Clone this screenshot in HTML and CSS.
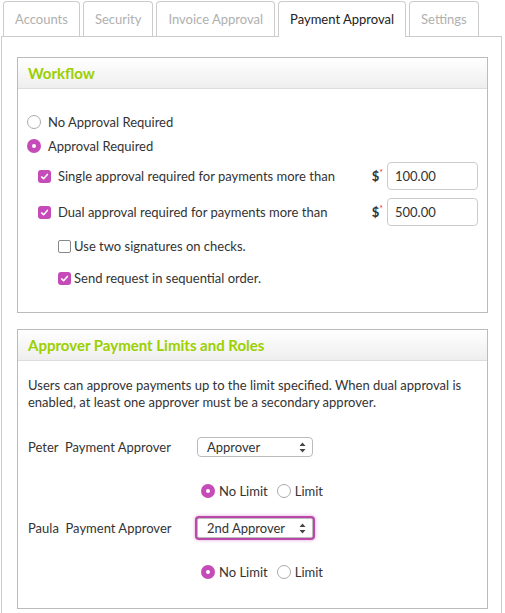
FILE: index.html
```html
<!DOCTYPE html>
<html lang="en">
<head>
    <meta charset="UTF-8">
    <meta name="viewport" content="width=device-width, initial-scale=1.0">
    <title>Payment Approval Settings</title>
    <link rel="stylesheet" href="styles.css">
</head>
<body>
<!-- Tabs -->
<div class="tabs">
    <div class="tab">Accounts</div>
    <div class="tab">Security</div>
    <div class="tab">Invoice Approval</div>
    <div class="tab active">Payment Approval</div>
    <div class="tab">Settings</div>
</div>

<div class="panel">
    <!-- Workflow -->
    <div class="section">
        <div class="section-head">Workflow</div>
        <div class="section-body workflow">
            <label class="radio-row"><span class="radio"></span>No Approval Required</label>
            <label class="radio-row"><span class="radio on"></span>Approval Required</label>

            <div class="amount-row">
                <span class="check on"><svg width="13" height="13" viewBox="0 0 13 13"><path d="M3.6 6.9 L5.6 8.8 L9.4 4.4" fill="none" stroke="#fff" stroke-width="1.5" stroke-linecap="round" stroke-linejoin="round"/></svg></span>
                <span class="amount-label">Single approval required for payments more than</span>
                <span class="currency">$<sup>*</sup></span>
                <input type="text" class="amount" value="100.00">
            </div>
            <div class="amount-row">
                <span class="check on"><svg width="13" height="13" viewBox="0 0 13 13"><path d="M3.6 6.9 L5.6 8.8 L9.4 4.4" fill="none" stroke="#fff" stroke-width="1.5" stroke-linecap="round" stroke-linejoin="round"/></svg></span>
                <span class="amount-label">Dual approval required for payments more than</span>
                <span class="currency">$<sup>*</sup></span>
                <input type="text" class="amount" value="500.00">
            </div>

            <label class="sub-row"><span class="check"></span>Use two signatures on checks.</label>
            <label class="sub-row"><span class="check on"><svg width="13" height="13" viewBox="0 0 13 13"><path d="M3.6 6.9 L5.6 8.8 L9.4 4.4" fill="none" stroke="#fff" stroke-width="1.5" stroke-linecap="round" stroke-linejoin="round"/></svg></span>Send request in sequential order.</label>
        </div>
    </div>

    <!-- Approver limits -->
    <div class="section">
        <div class="section-head">Approver Payment Limits and Roles</div>
        <div class="section-body limits">
            <p class="intro">Users can approve payments up to the limit specified. When dual approval is enabled, at least one approver must be a secondary approver.</p>

            <div class="approver-row first">
                <span class="approver-name">Peter&nbsp; Payment Approver</span>
                <div class="select">
                    <span>Approver</span>
                    <svg width="7" height="11" viewBox="0 0 7 11"><path d="M3.5 0.5 L6.5 4 H0.5 Z M3.5 10.5 L6.5 7 H0.5 Z" fill="#444"/></svg>
                </div>
            </div>
            <div class="limit-row">
                <label><span class="radio on"></span>No Limit</label>
                <label><span class="radio"></span>Limit</label>
            </div>

            <div class="approver-row">
                <span class="approver-name">Paula&nbsp; Payment Approver</span>
                <div class="select focused">
                    <span>2nd Approver</span>
                    <svg width="7" height="11" viewBox="0 0 7 11"><path d="M3.5 0.5 L6.5 4 H0.5 Z M3.5 10.5 L6.5 7 H0.5 Z" fill="#444"/></svg>
                </div>
            </div>
            <div class="limit-row">
                <label><span class="radio on"></span>No Limit</label>
                <label><span class="radio"></span>Limit</label>
            </div>
        </div>
    </div>
</div>
</body>
</html>
```

FILE: styles.css
```css
body {
    font-family: Lato, "Open Sans", sans-serif;
    font-size: 13px;
    color: #333;
    margin: 0;
    padding: 0;
    background-color: #fff;
}

/* Tabs */
.tabs {
    display: flex;
    align-items: flex-end;
    gap: 3px;
    height: 35px;
    margin-top: 1px;
    padding-left: 3px;
}
.tab {
    height: 34px;
    line-height: 34px;
    padding: 0 11px;
    border: 1px solid #ccc;
    border-bottom: none;
    border-radius: 4px 4px 0 0;
    color: #b0b0b0;
    background-color: #fff;
}
.tab.active {
    height: 35px;
    margin-bottom: -1px;
    color: #222;
    position: relative;
    z-index: 1;
}

.panel {
    width: 499px;
    margin-left: 1px;
    border: 1px solid #ccc;
    padding: 20px 0 0 0;
}

/* Sections */
.section {
    width: 469px;
    margin: 0 0 16px 15px;
    border: 1px solid #bbb;
}
.section-head {
    height: 30px;
    line-height: 30px;
    padding-left: 10px;
    border-bottom: 1px solid #ddd;
    background: linear-gradient(#fff, #eee);
    color: #9bd000;
    font-weight: bold;
    font-size: 15px;
}
.section-body {
    padding: 0 9px;
}

/* Radios and checkboxes */
.radio {
    display: inline-block;
    box-sizing: border-box;
    width: 14px;
    height: 14px;
    border: 1px solid #aaa;
    border-radius: 50%;
    background-color: #fff;
    flex-shrink: 0;
}
.radio.on {
    border: 5px solid #c54cb8;
}
.check {
    display: inline-flex;
    box-sizing: border-box;
    width: 13px;
    height: 13px;
    border: 1px solid #888;
    border-radius: 2px;
    background-color: #fff;
    flex-shrink: 0;
}
.check.on {
    border: none;
    border-radius: 3px;
    background-color: #c54cb8;
}

.workflow {
    padding-top: 21px;
    padding-bottom: 18px;
}
.radio-row {
    display: flex;
    align-items: center;
    gap: 7px;
    height: 24px;
}
.amount-row {
    display: flex;
    align-items: center;
    height: 36px;
    padding-left: 11px;
}
.amount-row .check {
    margin-right: 7px;
}
.amount-label {
    flex: 1;
}
.currency {
    font-weight: bold;
    margin-right: 4px;
}
.currency sup {
    color: #e33;
    font-size: 9px;
    font-weight: normal;
}
input.amount {
    box-sizing: border-box;
    width: 91px;
    height: 28px;
    padding: 0 7px;
    border: 1px solid #ccc;
    border-radius: 4px;
    font-family: inherit;
    font-size: 13px;
    color: #333;
}
.sub-row {
    display: flex;
    align-items: center;
    gap: 3px;
    height: 32px;
    padding-left: 31px;
}

/* Limits */
.limits {
    padding: 16px 10px 26px 10px;
}
.intro {
    margin: 0;
    line-height: 17px;
}
.approver-row {
    display: flex;
    align-items: center;
    height: 20px;
    margin-top: 17px;
}
.approver-row.first {
    margin-top: 26px;
}
.approver-name {
    width: 169px;
}
.select {
    box-sizing: border-box;
    display: flex;
    align-items: center;
    justify-content: space-between;
    width: 116px;
    height: 20px;
    padding: 0 6px 0 9px;
    border: 1px solid #bbb;
    border-radius: 4px;
    background-color: #fff;
}
.select.focused {
    border-radius: 2px;
    box-shadow: 0 0 0 2px #b948a8, 0 0 3px 3px rgba(197, 76, 184, 0.3);
}
.limit-row {
    display: flex;
    align-items: center;
    gap: 9px;
    height: 20px;
    margin-top: 24px;
    padding-left: 173px;
}
.limit-row label {
    display: flex;
    align-items: center;
    gap: 4px;
}
```
